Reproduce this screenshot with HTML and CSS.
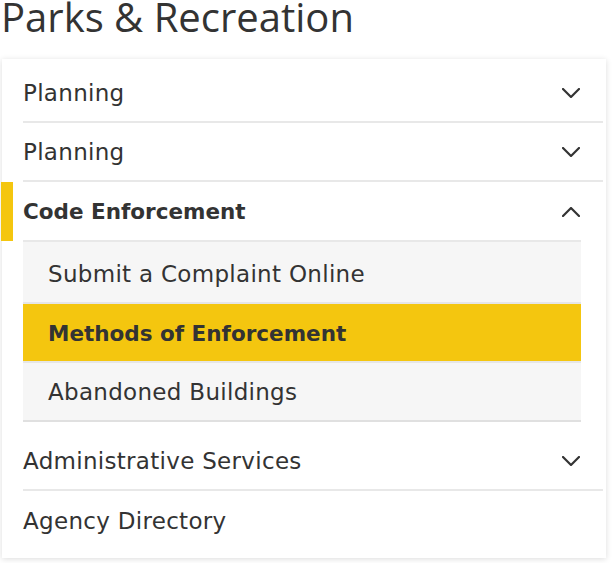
FILE: index.html
```html
<!DOCTYPE html>
<html lang="en">
<head>
<meta charset="utf-8">
<title>Parks &amp; Recreation</title>
<link rel="stylesheet" href="styles.css">
</head>
<body>
<h1 class="title">Parks &amp; Recreation</h1>
<nav class="card">
  <ul class="menu">
    <li class="item">
      <a class="row" href="#"><span class="label">Planning</span>
        <svg class="chev" viewBox="0 0 18 10" width="18" height="10"><path d="M1 1 L9 9 L17 1"/></svg></a>
    </li>
    <li class="item">
      <a class="row" href="#"><span class="label">Planning</span>
        <svg class="chev" viewBox="0 0 18 10" width="18" height="10"><path d="M1 1 L9 9 L17 1"/></svg></a>
    </li>
    <li class="item open">
      <a class="row active" href="#"><span class="label">Code Enforcement</span>
        <svg class="chev" viewBox="0 0 18 10" width="18" height="10"><path d="M1 9 L9 1 L17 9"/></svg></a>
      <ul class="sub">
        <li><a class="sub-row" href="#">Submit a Complaint Online</a></li>
        <li><a class="sub-row current" href="#">Methods of Enforcement</a></li>
        <li><a class="sub-row" href="#">Abandoned Buildings</a></li>
      </ul>
    </li>
    <li class="item">
      <a class="row" href="#"><span class="label">Administrative Services</span>
        <svg class="chev" viewBox="0 0 18 10" width="18" height="10"><path d="M1 1 L9 9 L17 1"/></svg></a>
    </li>
    <li class="item last">
      <a class="row" href="#"><span class="label">Agency Directory</span></a>
    </li>
  </ul>
</nav>
</body>
</html>
```

FILE: styles.css
```css
* { box-sizing: border-box; }
html, body { margin: 0; padding: 0; background: #ffffff; }
body {
  font-family: "DejaVu Sans", "Open Sans", "Liberation Sans", sans-serif;
  color: #333333;
  width: 614px;
  height: 563px;
  overflow: hidden;
}
.title {
  margin: 0;
  padding-left: 1px;
  font-family: "Open Sans", "Noto Sans", sans-serif;
  font-size: 40px;
  line-height: 33px;
  font-weight: 400;
  color: #333333;
  height: 59px;
  padding-top: 0;
}
.card {
  margin-left: 2px;
  width: 604px;
  background: #ffffff;
  box-shadow: 0 1px 6px rgba(0, 0, 0, 0.14);
  padding: 5px 3px 8px 21px;
}
.menu, .sub { list-style: none; margin: 0; padding: 0; }
.row {
  position: relative;
  display: flex;
  align-items: center;
  justify-content: space-between;
  height: 59px;
  padding-right: 23px;
  padding-top: 1px;
  border-bottom: 2px solid #e8e8e8;
  color: #333333;
  text-decoration: none;
  font-size: 23px;
  letter-spacing: 0.3px;
}
.item.last .row { border-bottom: none; }
.item.open .row { border-bottom: none; height: 58px; }
.row.active { font-weight: 700; font-size: 21.5px; letter-spacing: 0; }
.row.active::before {
  content: "";
  position: absolute;
  left: -22px;
  top: 0;
  width: 12px;
  height: 59px;
  background: #f4c60f;
}
.chev {
  display: block;
  fill: none;
  stroke: #333333;
  stroke-width: 2.2;
  stroke-linecap: round;
  stroke-linejoin: round;
}
.sub {
  margin: 0 22px 10px 0;
  background: #f6f6f6;
  border-top: 2px solid #e8e8e8;
  padding-top: 3px;
}
.sub-row {
  display: flex;
  align-items: center;
  height: 59px;
  padding-left: 25px;
  padding-top: 1px;
  border-bottom: 2px solid #e6e6e6;
  color: #333333;
  text-decoration: none;
  font-size: 23px;
  letter-spacing: 0.3px;
}
.sub li:last-child .sub-row { border-bottom-color: #e0e0e0; }
.sub-row.current {
  background: #f4c60f;
  font-weight: 700;
  font-size: 21.5px;
  letter-spacing: 0;
}
```
